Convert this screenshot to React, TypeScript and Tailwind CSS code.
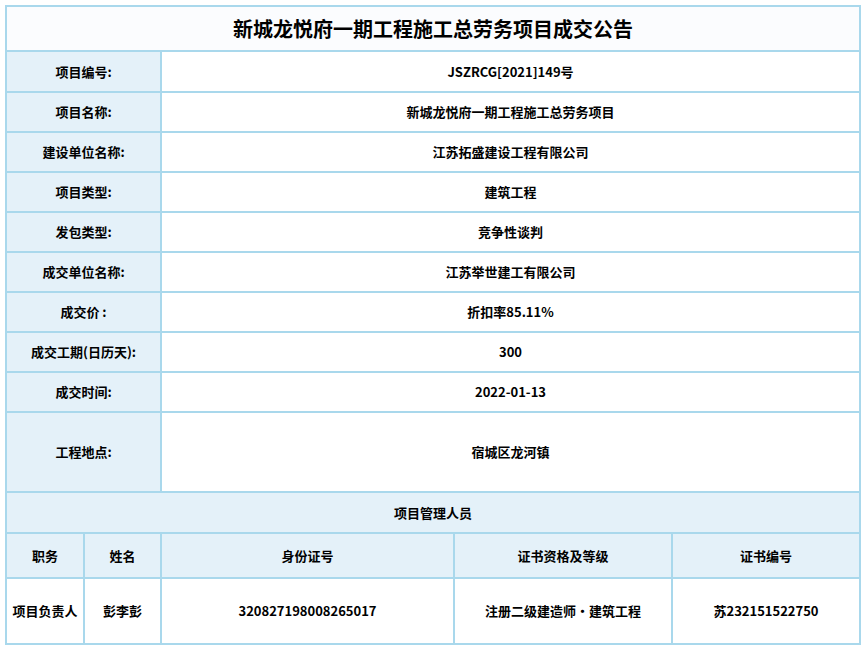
export default function App() {
  const rows: [string, string, number][] = [
    ['项目编号:', 'JSZRCG[2021]149号', 41],
    ['项目名称:', '新城龙悦府一期工程施工总劳务项目', 40],
    ['建设单位名称:', '江苏拓盛建设工程有限公司', 40],
    ['项目类型:', '建筑工程', 40],
    ['发包类型:', '竞争性谈判', 40],
    ['成交单位名称:', '江苏举世建工有限公司', 40],
    ['成交价 :', '折扣率85.11%', 40],
    ['成交工期(日历天):', '300', 40],
    ['成交时间:', '2022-01-13', 40],
    ['工程地点:', '宿城区龙河镇', 80],
  ];
  const b = 'border-2 border-[#a9d8ec]';
  return (
    <div className="p-[5px] bg-white" style={{ fontFamily: '"Noto Sans CJK SC", "Open Sans", sans-serif' }}>
      <table className="w-[854px] border-collapse table-fixed text-[13px] font-bold text-black text-center">
        <colgroup>
          <col className="w-[78px]" />
          <col className="w-[77px]" />
          <col className="w-[293px]" />
          <col className="w-[218px]" />
          <col className="w-[188px]" />
        </colgroup>
        <tbody>
          <tr className="h-[45px]">
            <td colSpan={5} className={`${b} bg-[#fbfcfe] text-[20px]`}>新城龙悦府一期工程施工总劳务项目成交公告</td>
          </tr>
          {rows.map(([k, v, h]) => (
            <tr key={k} style={{ height: h }}>
              <td colSpan={2} className={`${b} bg-[#e4f1f9]`}>{k}</td>
              <td colSpan={3} className={`${b} bg-white`}>{v}</td>
            </tr>
          ))}
          <tr className="h-[41px]">
            <td colSpan={5} className={`${b} bg-[#e4f1f9]`}>项目管理人员</td>
          </tr>
          <tr className="h-[45px] bg-[#e4f1f9]">
            {['职务', '姓名', '身份证号', '证书资格及等级', '证书编号'].map(t => (
              <td key={t} className={b}>{t}</td>
            ))}
          </tr>
          <tr className="h-[66px] bg-white">
            {['项目负责人', '彭李彭', '320827198008265017', '注册二级建造师•建筑工程', '苏232151522750'].map(t => (
              <td key={t} className={b}>{t}</td>
            ))}
          </tr>
        </tbody>
      </table>
    </div>
  );
}
